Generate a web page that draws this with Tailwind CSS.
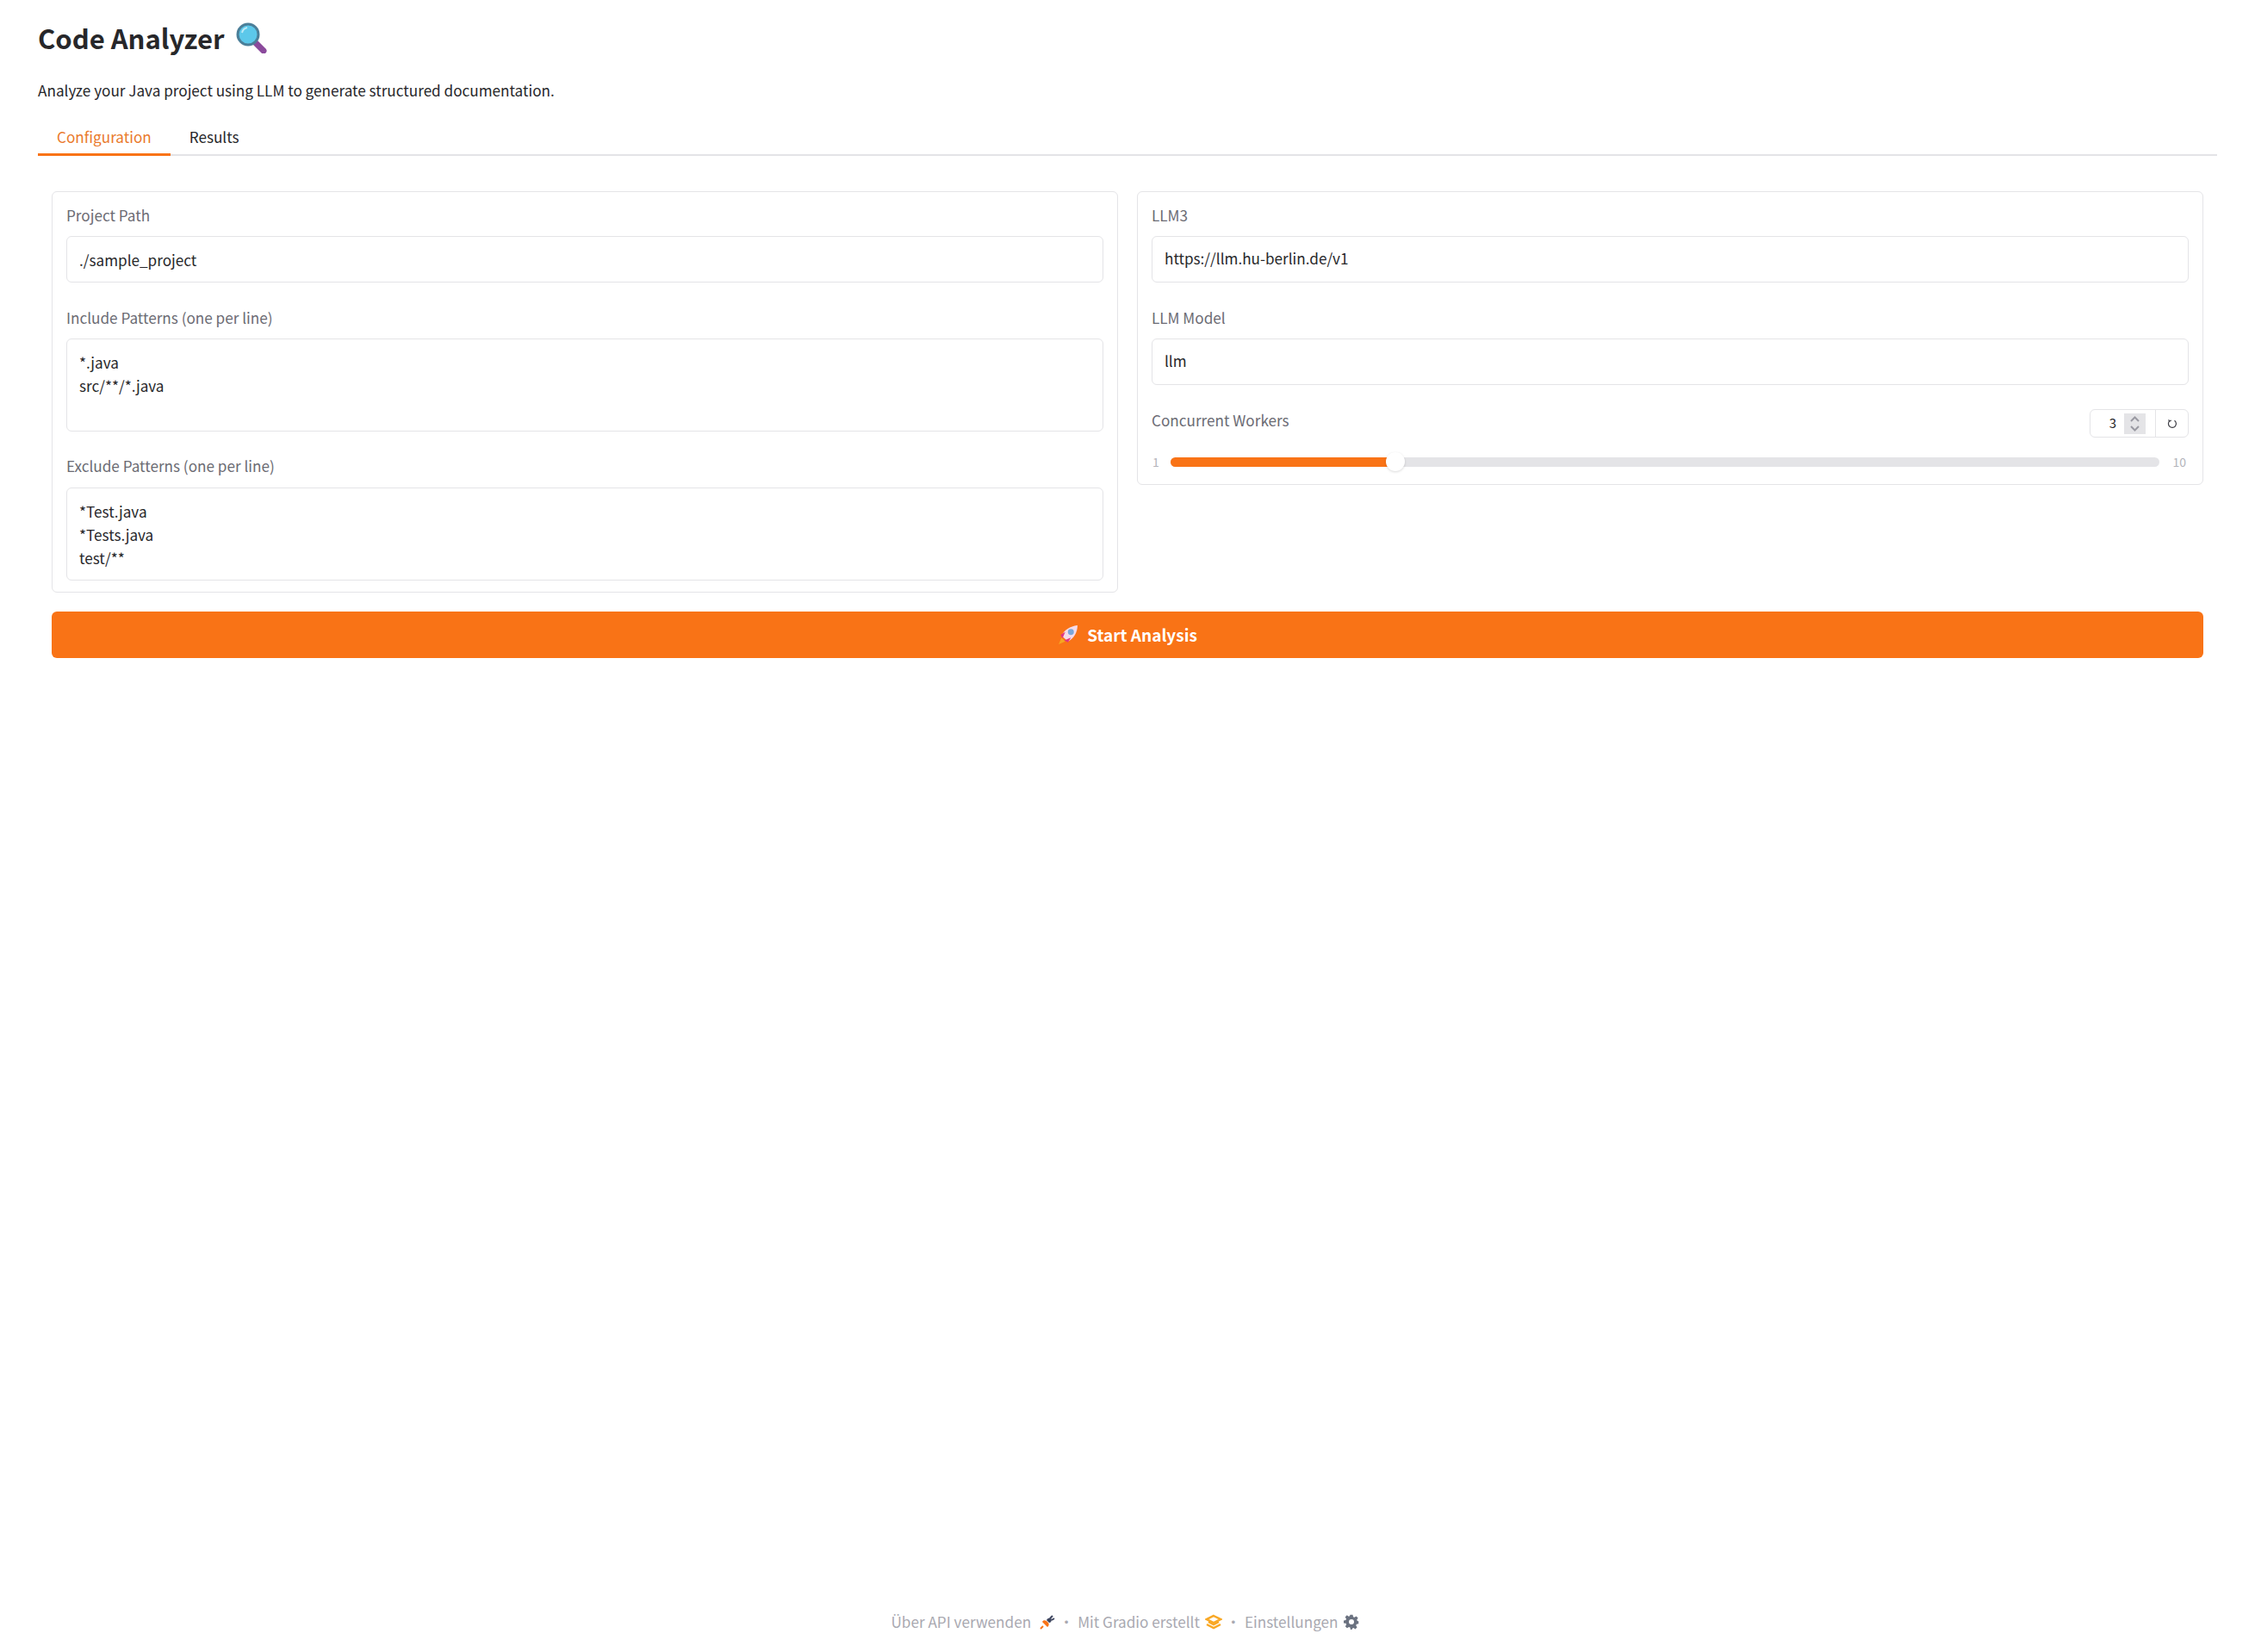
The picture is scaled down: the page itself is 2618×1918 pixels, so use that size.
<!DOCTYPE html>
<html lang="en">
<head>
<meta charset="UTF-8">
<title>Code Analyzer</title>
<script src="https://cdn.jsdelivr.net/npm/@tailwindcss/browser@4"></script>
</head>
<body class="bg-white font-['Noto_Sans_CJK_SC','Noto_Sans',sans-serif] h-[1918px] flex flex-col text-[#27272a] overflow-hidden">
<main class="px-[44px] pt-[20px] flex-1">
  <h1 class="text-[31px] leading-[48px] font-semibold flex items-center gap-[14px]">Code Analyzer
    <svg width="36" height="36" viewBox="0 0 36 36"><path d="M23 24l9 9" stroke="#8b4a9c" stroke-width="7" stroke-linecap="round"/><circle cx="14" cy="14" r="12" fill="#5cc8ea" stroke="#4b7f99" stroke-width="3"/><path d="M7 12a8 8 0 0 1 6-6" stroke="#bdeaf7" stroke-width="2" fill="none"/></svg>
  </h1>
  <p class="text-[17.15px] leading-[28px] mt-[23px]">Analyze your Java project using LLM to generate structured documentation.</p>
  <div class="flex border-b-2 border-[#e4e4e7] mt-[21px] h-[41px] text-[17.15px]">
    <div class="px-[22px] h-[41px] border-b-[3px] border-[#f97316] text-[#ea7a2c] leading-[38px]">Configuration</div>
    <div class="px-[22px] leading-[38px]">Results</div>
  </div>
  <div class="px-[16px] mt-[41px]">
    <div class="flex gap-[22px] items-start">
      <section class="flex-1 h-[466px] border border-[#e4e4e7] rounded-[6px] px-[16px] pt-[13px] text-[17.15px]">
        <label class="block text-[#6b6b73] leading-[28px] mb-[10px]">Project Path</label>
        <div class="border border-[#e4e4e7] rounded-[6px] h-[54px] px-[14px] leading-[54px]">./sample_project</div>
        <label class="block text-[#6b6b73] leading-[28px] mt-[27px] mb-[10px]">Include Patterns (one per line)</label>
        <div class="border border-[#e4e4e7] rounded-[6px] h-[108px] px-[14px] pt-[13px] leading-[27px]">*.java<br>src/**/*.java</div>
        <label class="block text-[#6b6b73] leading-[28px] mt-[26px] mb-[11px]">Exclude Patterns (one per line)</label>
        <div class="border border-[#e4e4e7] rounded-[6px] h-[108px] px-[14px] pt-[13px] leading-[27px]">*Test.java<br>*Tests.java<br>test/**</div>
      </section>
      <section class="flex-1 h-[341px] border border-[#e4e4e7] rounded-[6px] px-[16px] pt-[13px] text-[17.15px]">
        <label class="block text-[#6b6b73] leading-[28px] mb-[10px]">LLM3</label>
        <div class="border border-[#e4e4e7] rounded-[6px] h-[54px] px-[14px] leading-[50px]">https://llm.hu-berlin.de/v1</div>
        <label class="block text-[#6b6b73] leading-[28px] mt-[27px] mb-[10px]">LLM Model</label>
        <div class="border border-[#e4e4e7] rounded-[6px] h-[54px] px-[14px] leading-[50px]">llm</div>
        <div class="flex justify-between items-start mt-[27px] h-[34px]">
          <label class="text-[#6b6b73] leading-[28px]">Concurrent Workers</label>
          <div class="flex border border-[#e4e4e7] rounded-[6px] h-[33px] w-[115px] text-[15px] items-center mt-[1px]">
            <span class="w-[30px] text-right">3</span>
            <span class="w-[25px] h-[24px] ml-[9px] bg-[#e4e4e7] flex items-center justify-center">
              <svg width="13" height="20" viewBox="0 0 13 20" fill="none" stroke="#9a9aa3" stroke-width="2"><path d="M2 7l4.500-4.500L11 7M2 13l4.500 4.500L11 13"/></svg>
            </span>
            <span class="ml-auto w-[38px] h-full border-l border-[#e4e4e7] flex items-center justify-center">
              <svg width="12" height="12" viewBox="0 0 12 12" fill="none" stroke="#3f3f46" stroke-width="1.200"><path d="M8.500 2.200A4.500 4.500 0 1 1 3 2.500M1.500 1.500L3 3l1.800-1"/></svg>
            </span>
          </div>
        </div>
        <div class="flex items-center mt-[18px] text-[14px] text-[#b4b4bb]">
          <span class="w-[22px] pl-[1px] text-left">1</span>
          <div class="flex-1 h-[11px] bg-[#e4e4e7] rounded-full relative">
            <div class="h-full w-[261px] bg-[#f97316] rounded-full"></div>
            <div class="absolute left-[250px] top-[-6px] w-[22px] h-[22px] rounded-full bg-white shadow-[0_1px_3px_rgba(0,0,0,0.15)]"></div>
          </div>
          <span class="w-[34px] text-right pr-[3px]">10</span>
        </div>
      </section>
    </div>
    <button class="w-full h-[54px] bg-[#f97316] text-white rounded-[6px] mt-[22px] text-[19px] font-semibold flex items-center justify-center gap-[10px]">
      <svg width="24" height="24" viewBox="0 0 22 22"><path d="M1 21l3-7 4 4z" fill="#f5a623"/><path d="M4 12C7 6 13 2 21 1c0 8-4 14-10 17z" fill="#f6dbe8"/><path d="M3 11l5-3-3 7zM11 19l3-5-7 3z" fill="#e0357f"/><circle cx="14" cy="8" r="3.200" fill="#7aa7d9"/></svg>
      <span>Start Analysis</span>
    </button>
  </div>
</main>
<footer class="flex justify-center items-center h-[70px] pb-[1px] pr-[6px] text-[17.15px] text-[#a9a9b1]">
  <span>Über API verwenden</span>
  <svg class="ml-[10px]" width="18" height="18" viewBox="0 0 18 18"><path d="M1 17l3-3" stroke="#f97316" stroke-width="2"/><path d="M3 9l6 6c2-1 2-4 1-5L8 8c-2-1-4-1-5 1z" fill="#f97316"/><path d="M8 7c1-2 3-3 5-2l1 1c0 2-1 4-3 4z" fill="#3f4660"/><path d="M12 5l3-3M14 7l3-2" stroke="#3f4660" stroke-width="2"/></svg>
  <span class="w-[26px] text-center">·</span>
  <span>Mit Gradio erstellt</span>
  <svg class="ml-[6px]" width="20" height="18" viewBox="0 0 20 18" fill="none" stroke="#f9a825" stroke-width="2.500"><path d="M10 2l8 4-8 4-8-4zM2 12l8 4 8-4"/><path d="M4 9l6 3 6-3"/></svg>
  <span class="w-[26px] text-center">·</span>
  <span>Einstellungen</span>
  <svg class="ml-[6px]" width="18" height="18" viewBox="0 0 24 24"><path fill="#6b7280" fill-rule="evenodd" d="M10 1h4l.7 3.200 1.900.8 2.800-1.800 2.800 2.800-1.800 2.800.8 1.900L23 11v4l-3.200.7-.8 1.900 1.800 2.800-2.800 2.800-2.800-1.800-1.900.8L12.600 24h-2l-.7-3.200-1.900-.8-2.800 1.800-2.800-2.800 1.800-2.800-.8-1.900L0 14v-4l3.200-.7.800-1.900-1.800-2.800L5 1.800l2.800 1.800 1.500-.6zM12 8a4 4 0 1 0 0 8 4 4 0 0 0 0-8z"/></svg>
</footer>
</body>
</html>
